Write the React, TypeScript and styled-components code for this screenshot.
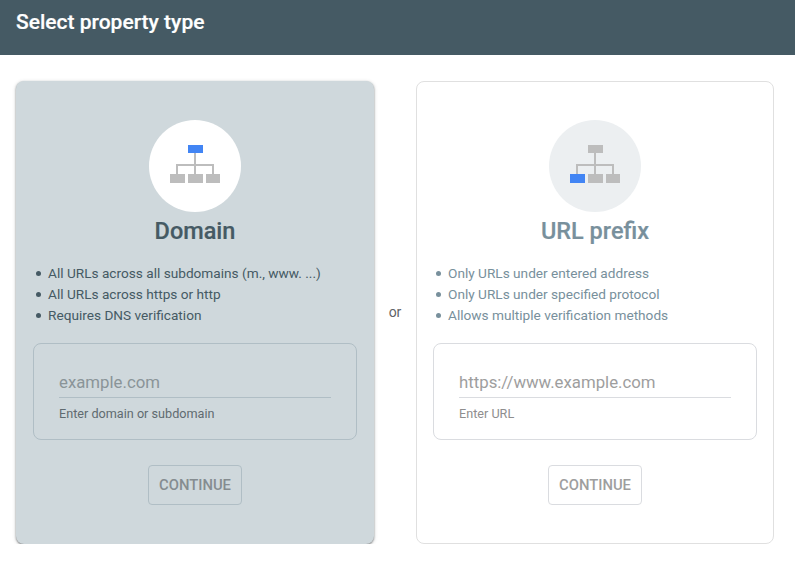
import React from 'react'
import styled, { createGlobalStyle } from 'styled-components'

const GlobalStyle = createGlobalStyle`
  html, body { margin: 0; padding: 0; background: #fff; }
  body { font-family: Roboto, "Noto Sans", sans-serif; }
`

const cards = [
  {
    title: 'Domain',
    active: true,
    blue: 'top',
    bullets: ['All URLs across all subdomains (m., www. ...)', 'All URLs across https or http', 'Requires DNS verification'],
    placeholder: 'example.com',
    hint: 'Enter domain or subdomain',
  },
  {
    title: 'URL prefix',
    active: false,
    blue: 'left',
    bullets: ['Only URLs under entered address', 'Only URLs under specified protocol', 'Allows multiple verification methods'],
    placeholder: 'https://www.example.com',
    hint: 'Enter URL',
  },
]

const SiteTree = ({ blue }: { blue: string }) => (
  <TreeIcon width="50" height="38" viewBox="0 0 50 38">
    <path d="M25 8v21M7 29v-9h36v9" fill="none" stroke="#bdbdbd" strokeWidth="2" />
    <rect x="18" y="0" width="15" height="8" fill={blue === 'top' ? '#4285f4' : '#bdbdbd'} />
    <rect x="0" y="29" width="15" height="9" fill={blue === 'left' ? '#4285f4' : '#bdbdbd'} />
    <rect x="18" y="29" width="15" height="9" fill="#bdbdbd" />
    <rect x="36" y="29" width="14" height="9" fill="#bdbdbd" />
  </TreeIcon>
)

const App = () => {
  return (
    <>
      <GlobalStyle />
      <Header>
        <HeaderTitle>Select property type</HeaderTitle>
      </Header>
      <Content>
        {cards.map((card, idx) => (
          <React.Fragment key={card.title}>
            {idx === 1 && <Or>or</Or>}
            <Card $active={card.active}>
              <Circle $active={card.active}>
                <SiteTree blue={card.blue} />
              </Circle>
              <Title $active={card.active}>{card.title}</Title>
              <Bullets $active={card.active}>
                {card.bullets.map((b) => (
                  <li key={b}>{b}</li>
                ))}
              </Bullets>
              <InputBox $active={card.active}>
                <Placeholder $active={card.active}>{card.placeholder}</Placeholder>
                <Hint $active={card.active}>{card.hint}</Hint>
              </InputBox>
              <ContinueButton $active={card.active}>CONTINUE</ContinueButton>
            </Card>
          </React.Fragment>
        ))}
      </Content>
    </>
  )
}

export default App

const Header = styled.header`
  height: 55px;
  box-sizing: border-box;
  padding: 9px 16px 0;
  background: #455a64;
`

const HeaderTitle = styled.h1`
  margin: 0;
  font-size: 21px;
  line-height: 26px;
  font-weight: 500;
  color: #fff;
  -webkit-text-stroke: 0.2px #fff;
`

const Content = styled.main`
  display: flex;
  align-items: center;
  padding: 26px 21px 0 16px;
`

const Or = styled.div`
  width: 42px;
  margin-top: -1px;
  text-align: center;
  font-size: 14px;
  color: #5f6368;
`

const Card = styled.section<{ $active: boolean }>`
  width: 358px;
  height: 463px;
  box-sizing: border-box;
  padding: ${({ $active }) => ($active ? '39px 17px 0' : '38px 16px 0')};
  display: flex;
  flex-direction: column;
  align-items: center;
  border-radius: 8px;
  background: ${({ $active }) => ($active ? '#cfd8dc' : '#fff')};
  border: ${({ $active }) => ($active ? 'none' : '1px solid #e0e0e0')};
  box-shadow: ${({ $active }) =>
    $active ? '0 1px 2px rgba(60,64,67,.6), 0 1px 4px rgba(60,64,67,.2)' : 'none'};
`

const Circle = styled.div<{ $active: boolean }>`
  width: 92px;
  height: 92px;
  flex: none;
  border-radius: 50%;
  display: flex;
  align-items: center;
  justify-content: center;
  background: ${({ $active }) => ($active ? '#fff' : '#eceff1')};
`

const TreeIcon = styled.svg`
  margin-bottom: 4px;
`

const Title = styled.h2<{ $active: boolean }>`
  margin: 4px 0 0;
  font-size: 23.5px;
  line-height: 30px;
  font-weight: 500;
  color: ${({ $active }) => ($active ? '#455a64' : '#78909c')};
  -webkit-text-stroke: 0.2px currentColor;
`

const Bullets = styled.ul<{ $active: boolean }>`
  align-self: stretch;
  margin: 17px 0 0;
  padding: 0 0 0 3px;
  list-style: none;
  font-size: 13.65px;
  line-height: 21px;
  color: ${({ $active }) => ($active ? '#455a64' : '#78909c')};

  li {
    display: flex;
    align-items: center;
    gap: 7px;
  }

  li::before {
    content: '';
    width: 5px;
    height: 5px;
    flex: none;
    border-radius: 50%;
    background: currentColor;
  }
`

const InputBox = styled.div<{ $active: boolean }>`
  align-self: stretch;
  height: 97px;
  flex: none;
  box-sizing: border-box;
  margin-top: 17px;
  padding: 25px 25px 0;
  border-radius: 8px;
  border: 1px solid ${({ $active }) => ($active ? '#b0bec5' : '#dadce0')};
`

const Placeholder = styled.div<{ $active: boolean }>`
  height: 28px;
  font-size: 16.8px;
  line-height: 26px;
  color: ${({ $active }) => ($active ? '#8a9498' : '#9e9e9e')};
  border-bottom: 1px solid ${({ $active }) => ($active ? '#b0bec5' : '#dadce0')};
`

const Hint = styled.div<{ $active: boolean }>`
  margin-top: 8px;
  font-size: 12.65px;
  line-height: 16px;
  color: ${({ $active }) => ($active ? '#5f6b70' : '#8e8e8e')};
`

const ContinueButton = styled.button<{ $active: boolean }>`
  margin-top: 25px;
  width: 94px;
  height: 40px;
  flex: none;
  padding: 0;
  font-family: inherit;
  font-size: 14.8px;
  font-weight: 500;
  color: ${({ $active }) => ($active ? '#858c90' : '#9e9e9e')};
  background: transparent;
  border-radius: 4px;
  border: 1px solid ${({ $active }) => ($active ? '#b0bec5' : '#dadce0')};
`
